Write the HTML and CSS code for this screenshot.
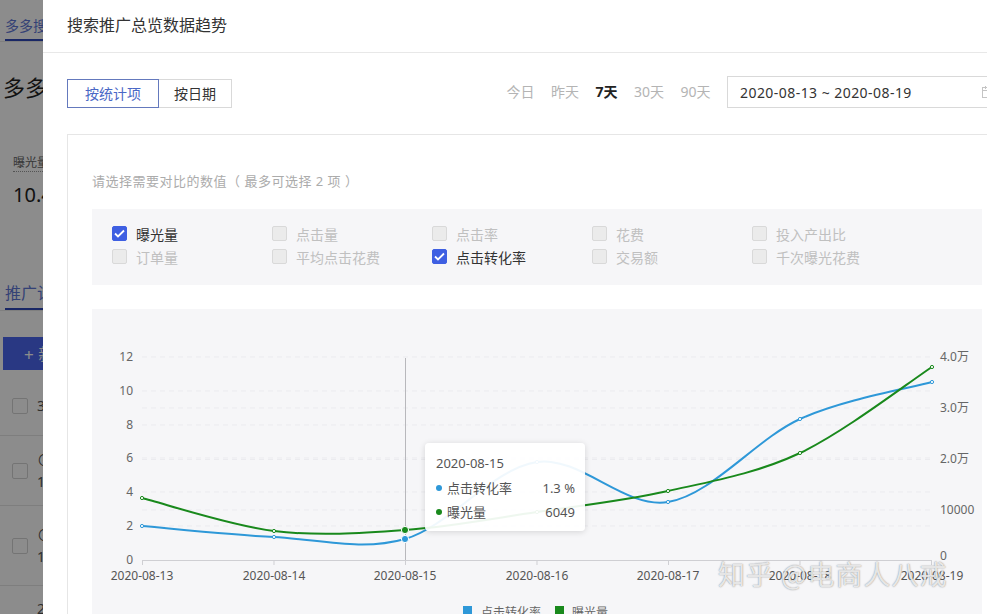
FILE: index.html
```html
<!DOCTYPE html>
<html lang="zh-CN">
<head>
<meta charset="utf-8">
<title>搜索推广总览数据趋势</title>
<link rel="stylesheet" href="styles.css">
</head>
<body>
<div class="page">
  <div class="topnav"><span class="nav-tab">多多搜索</span></div>
  <h1 class="page-title">多多搜索推广</h1>
  <div class="stat">
    <div class="stat-label">曝光量</div>
    <div class="stat-value">10.4万</div>
  </div>
  <div class="sub-tabs"><span class="sub-tab">推广计划</span></div>
  <button class="add-btn">+ 新建计划</button>
  <div class="plan-table">
    <div class="plan-row r1"><span class="cb"></span><div class="plan-text"><div>3月推广计划</div></div></div>
    <div class="plan-row r2"><span class="cb"></span><div class="plan-text"><div>⊙ 推广中</div><div>1号计划</div></div></div>
    <div class="plan-row r3"><span class="cb"></span><div class="plan-text"><div>⊙ 推广中</div><div>1号计划</div></div></div>
    <div class="plan-row r4"><div class="plan-text indent"><div>2号计划</div></div></div>
  </div>
</div>

<div class="mask"></div>

<div class="modal">
  <div class="modal-header">搜索推广总览数据趋势</div>
  <div class="modal-body">
    <div class="toolbar">
      <div class="seg">
        <button class="seg-btn active">按统计项</button>
        <button class="seg-btn">按日期</button>
      </div>
      <div class="range">
        <span class="range-item">今日</span>
        <span class="range-item">昨天</span>
        <span class="range-item current">7天</span>
        <span class="range-item">30天</span>
        <span class="range-item">90天</span>
        <div class="date-input">
          <span class="date-text">2020-08-13 ~ 2020-08-19</span>
          <svg class="cal-icon" width="12" height="12" viewBox="0 0 12 12"><rect x="0.5" y="1.5" width="11" height="10" fill="none" stroke="#c4c4c4"/><line x1="0.5" y1="4.5" x2="11.5" y2="4.5" stroke="#c4c4c4"/><line x1="3.5" y1="0" x2="3.5" y2="3" stroke="#c4c4c4"/><line x1="8.5" y1="0" x2="8.5" y2="3" stroke="#c4c4c4"/></svg>
        </div>
      </div>
    </div>

    <div class="card">
      <p class="hint">请选择需要对比的数值（ 最多可选择 2 项 ）</p>
      <div class="metric-panel">
        <label class="metric on"><span class="box"><svg width="11" height="9" viewBox="0 0 11 9"><polyline points="1,4.5 4,7.5 10,1.5" fill="none" stroke="#fff" stroke-width="1.8"/></svg></span>曝光量</label>
        <label class="metric"><span class="box"></span>点击量</label>
        <label class="metric"><span class="box"></span>点击率</label>
        <label class="metric"><span class="box"></span>花费</label>
        <label class="metric"><span class="box"></span>投入产出比</label>
        <label class="metric"><span class="box"></span>订单量</label>
        <label class="metric"><span class="box"></span>平均点击花费</label>
        <label class="metric on"><span class="box"><svg width="11" height="9" viewBox="0 0 11 9"><polyline points="1,4.5 4,7.5 10,1.5" fill="none" stroke="#fff" stroke-width="1.8"/></svg></span>点击转化率</label>
        <label class="metric"><span class="box"></span>交易额</label>
        <label class="metric"><span class="box"></span>千次曝光花费</label>
      </div>

      <div class="chart">
        <svg class="chart-svg" width="890" height="320" viewBox="92 309 890 320">
          <g class="grid">
            <line x1="142" y1="357" x2="932" y2="357"/>
            <line x1="142" y1="391" x2="932" y2="391"/>
            <line x1="142" y1="408" x2="932" y2="408"/>
            <line x1="142" y1="425" x2="932" y2="425"/>
            <line x1="142" y1="458" x2="932" y2="458"/>
            <line x1="142" y1="459.5" x2="932" y2="459.5"/>
            <line x1="142" y1="492" x2="932" y2="492"/>
            <line x1="142" y1="510" x2="932" y2="510"/>
            <line x1="142" y1="526" x2="932" y2="526"/>
          </g>
          <g class="axis">
            <line x1="142" y1="560.5" x2="932" y2="560.5"/>
            <line x1="142.5" y1="560" x2="142.5" y2="565"/>
            <line x1="274" y1="560" x2="274" y2="565"/>
            <line x1="405.5" y1="560" x2="405.5" y2="565"/>
            <line x1="537" y1="560" x2="537" y2="565"/>
            <line x1="668.5" y1="560" x2="668.5" y2="565"/>
            <line x1="800" y1="560" x2="800" y2="565"/>
            <line x1="931.5" y1="560" x2="931.5" y2="565"/>
          </g>
          <line class="crosshair" x1="405.5" y1="358" x2="405.5" y2="560"/>

          <g class="ylabels">
            <text x="133" y="361">12</text>
            <text x="133" y="395">10</text>
            <text x="133" y="429">8</text>
            <text x="133" y="462">6</text>
            <text x="133" y="496">4</text>
            <text x="133" y="530">2</text>
            <text x="133" y="564">0</text>
          </g>
          <g class="ylabels-right">
            <text x="940" y="361">4.0万</text>
            <text x="940" y="412">3.0万</text>
            <text x="940" y="463">2.0万</text>
            <text x="940" y="514">10000</text>
            <text x="940" y="560">0</text>
          </g>
          <g class="xlabels">
            <text x="142" y="580">2020-08-13</text>
            <text x="274" y="580">2020-08-14</text>
            <text x="405" y="580">2020-08-15</text>
            <text x="537" y="580">2020-08-16</text>
            <text x="668" y="580">2020-08-17</text>
            <text x="800" y="580">2020-08-18</text>
            <text x="932" y="580">2020-08-19</text>
          </g>

          <path class="line-blue" d="M142,526 C164,527.8 230.2,534.8 274,537 C317.8,539.2 361.2,551.5 405,539 C448.8,526.5 493.2,468.2 537,462 C580.8,455.8 624.2,509.2 668,502 C711.8,494.8 756,439 800,419 C844,399 910,388.2 932,382"/>
          <path class="line-green" d="M142,498 C164,503.5 230.2,525.7 274,531 C317.8,536.3 361.2,533.2 405,530 C448.8,526.8 493.2,518.5 537,512 C580.8,505.5 624.2,500.8 668,491 C711.8,481.2 756,473.7 800,453 C844,432.3 910,381.3 932,367"/>

          <g class="dots-blue">
            <circle cx="142" cy="526" r="1.6"/>
            <circle cx="274" cy="537" r="1.6"/>
            <circle cx="537" cy="462" r="1.6"/>
            <circle cx="668" cy="502" r="1.6"/>
            <circle cx="800" cy="419" r="1.6"/>
            <circle cx="932" cy="382" r="1.6"/>
          </g>
          <g class="dots-green">
            <circle cx="142" cy="498" r="1.6"/>
            <circle cx="274" cy="531" r="1.6"/>
            <circle cx="537" cy="512" r="1.6"/>
            <circle cx="668" cy="491" r="1.6"/>
            <circle cx="800" cy="453" r="1.6"/>
            <circle cx="932" cy="367" r="1.6"/>
          </g>
          <circle class="hover-blue" cx="405" cy="539" r="3.6"/>
          <circle class="hover-green" cx="405" cy="530" r="3.6"/>

          <g class="legend">
            <rect x="463" y="606" width="9" height="9" fill="#2e98d8"/>
            <text x="481" y="617">点击转化率</text>
            <rect x="555" y="606" width="9" height="9" fill="#19891c"/>
            <text x="572" y="617">曝光量</text>
          </g>
        </svg>

        <div class="tooltip">
          <div class="tip-title">2020-08-15</div>
          <div class="tip-row"><span class="tip-dot blue"></span><span class="tip-name">点击转化率</span><span class="tip-val">1.3 %</span></div>
          <div class="tip-row"><span class="tip-dot green"></span><span class="tip-name">曝光量</span><span class="tip-val">6049</span></div>
        </div>
      </div>
    </div>
  </div>
</div>

<div class="watermark">知乎 @电商人八戒</div>
</body>
</html>
```

FILE: styles.css
```css
* { box-sizing: border-box; }
html, body { margin: 0; height: 100%; }
body {
  font-family: "Noto Sans", "Noto Sans CJK SC", sans-serif;
  color: #333;
  background: #fff;
  overflow: hidden;
  position: relative;
}

/* underlying page */
.page { width: 320px; }
.topnav { height: 42px; border-bottom: 1px solid #e8e8e8; padding-left: 5px; }
.nav-tab {
  display: inline-block; font-size: 14px; line-height: 20px;
  padding-top: 16px; padding-bottom: 3px;
  border-bottom: 2px solid #2f47b8; color: #6077d6;
}
.page-title { margin: 30px 0 0 3px; font-size: 22px; line-height: 30px; font-weight: normal; color: #222; }
.stat { margin: 48px 0 0 13px; }
.stat-label { display: inline-block; font-size: 12px; line-height: 16px; color: #666; border-bottom: 1px dotted #999; }
.stat-value { margin-top: 10px; font-size: 20px; line-height: 26px; color: #222; }
.sub-tabs { margin-top: 74px; border-bottom: 1px solid #e8e8e8; padding-left: 5px; }
.sub-tab {
  display: inline-block; font-size: 16px; line-height: 22px;
  padding-bottom: 4px; border-bottom: 2px solid #2f47b8; color: #6077d6;
}
.add-btn {
  display: block; margin: 26px 0 0 3px; height: 33px; width: 140px;
  background: #4c66ee; color: #fff; border: 0; font-family: inherit;
  font-size: 17px; text-align: left; padding: 0 0 0 21px;
}
.plan-table { margin-top: 6px; }
.plan-row { display: flex; align-items: center; padding-left: 12px; border-bottom: 1px solid #e6e6e6; font-size: 14px; line-height: 22px; color: #555; }
.plan-row.r1 { height: 60px; }
.plan-row.r2 { height: 70px; }
.plan-row.r3 { height: 80px; }
.plan-row.r4 { height: 60px; align-items: flex-start; padding-top: 12px; border-bottom: 0; }
.cb { width: 16px; height: 16px; border: 1px solid #d4d4d4; border-radius: 2px; background: #fff; margin-right: 9px; flex: none; }
.plan-text.indent { padding-left: 25px; }

.mask { position: fixed; inset: 0; background: rgba(0, 0, 0, 0.45); }

/* modal */
.modal {
  position: absolute; left: 43px; top: 0;
  width: 988px; height: 720px; background: #fff;
}
.modal-header {
  height: 53px; line-height: 51px; padding-left: 24px;
  border-bottom: 1px solid #e8e8e8;
  font-size: 16px; color: #333;
}
.modal-body { padding: 23px 24px 0; }
.toolbar { display: flex; justify-content: space-between; align-items: flex-end; }
.seg { display: flex; }
.seg-btn {
  height: 29px; padding: 0 15px; font-family: inherit; font-size: 14px; line-height: 26px;
  background: #fff; color: #333; border: 1px solid #d9d9d9; margin: 0;
}
.seg-btn.active { border-color: #6479bd; color: #4a68c6; padding: 0 17px; }
.seg-btn + .seg-btn { border-left: 0; }
.range { display: flex; align-items: center; }
.range-item { font-size: 14px; color: #b4b4b4; margin-right: 16.5px; line-height: 20px; }
.range-item.current { color: #222; font-weight: bold; }
.date-input {
  width: 280px; height: 32px; border: 1px solid #d9d9d9;
  display: flex; align-items: center; justify-content: space-between;
  padding: 0 12px; font-size: 14px; color: #333;
}
.date-text { letter-spacing: 0.45px; }
.cal-icon { display: block; }

.card {
  margin-top: 26px; border: 1px solid #e6e6e6;
  padding: 36px 24px 0;
}
.hint { margin: 0; font-size: 13px; line-height: 20px; color: #ababab; letter-spacing: 0.5px; }
.metric-panel {
  margin-top: 18px; background: #f6f6f8;
  padding: 13px 20px 17px;
  display: grid; grid-template-columns: repeat(5, 160px); grid-auto-rows: 23px;
}
.metric { display: flex; align-items: center; gap: 9px; font-size: 14px; color: #c0c0c0; }
.metric.on { color: #333; }
.box {
  width: 15px; height: 15px; border: 1px solid #d9d9d9; background: #ebebeb;
  border-radius: 2px; display: flex; align-items: center; justify-content: center;
}
.metric.on .box { background: #3e5fe2; border-color: #3e5fe2; }
.box svg { display: block; }

.chart { position: relative; margin-top: 24px; height: 320px; background: #f6f6f8; }
.chart-svg { display: block; font-family: "Noto Sans", "Noto Sans CJK SC", sans-serif; }
.grid line { stroke: #ebebef; stroke-width: 1; stroke-dasharray: 5 4; }
.axis line { stroke: #cfcfd3; stroke-width: 1; }
.crosshair { stroke: #b8b8bc; stroke-width: 1; }
.ylabels text { font-size: 12px; fill: #666; text-anchor: end; }
.ylabels-right text { font-size: 12px; fill: #666; text-anchor: start; }
.xlabels text { font-size: 12px; fill: #555; text-anchor: middle; }
.legend text { font-size: 12px; fill: #666; }
.line-blue { fill: none; stroke: #2e98d8; stroke-width: 2; }
.line-green { fill: none; stroke: #19891c; stroke-width: 2; }
.dots-blue circle { fill: #fff; stroke: #2e98d8; stroke-width: 1; }
.dots-green circle { fill: #fff; stroke: #19891c; stroke-width: 1; }
.hover-blue { fill: #2e98d8; stroke: #fff; stroke-width: 1; }
.hover-green { fill: #19891c; stroke: #fff; stroke-width: 1; }

.tooltip {
  position: absolute; left: 333px; top: 134px;
  width: 160px; height: 88px;
  background: rgba(255, 255, 255, 0.93);
  border-radius: 4px;
  box-shadow: 0 1px 6px rgba(0, 0, 0, 0.14);
  padding: 10px 10px 0 11px;
  font-size: 13px; color: #555;
}
.tip-title { line-height: 20px; margin-bottom: 3px; }
.tip-row { display: flex; align-items: center; line-height: 24px; }
.tip-dot { width: 6px; height: 6px; border-radius: 50%; margin-right: 5px; }
.tip-dot.blue { background: #2e98d8; }
.tip-dot.green { background: #19891c; }
.tip-name { flex: 1; }
.tip-val { text-align: right; }

.watermark {
  position: absolute; left: 718px; top: 556px;
  font-family: "Noto Sans CJK SC", sans-serif;
  font-size: 27px; line-height: 36px; letter-spacing: 1px;
  color: rgba(255, 255, 255, 0.8);
  text-shadow: 0 0 1px rgba(60, 60, 60, 0.5), 0 0 2px rgba(60, 60, 60, 0.25);
  white-space: nowrap;
}
```
